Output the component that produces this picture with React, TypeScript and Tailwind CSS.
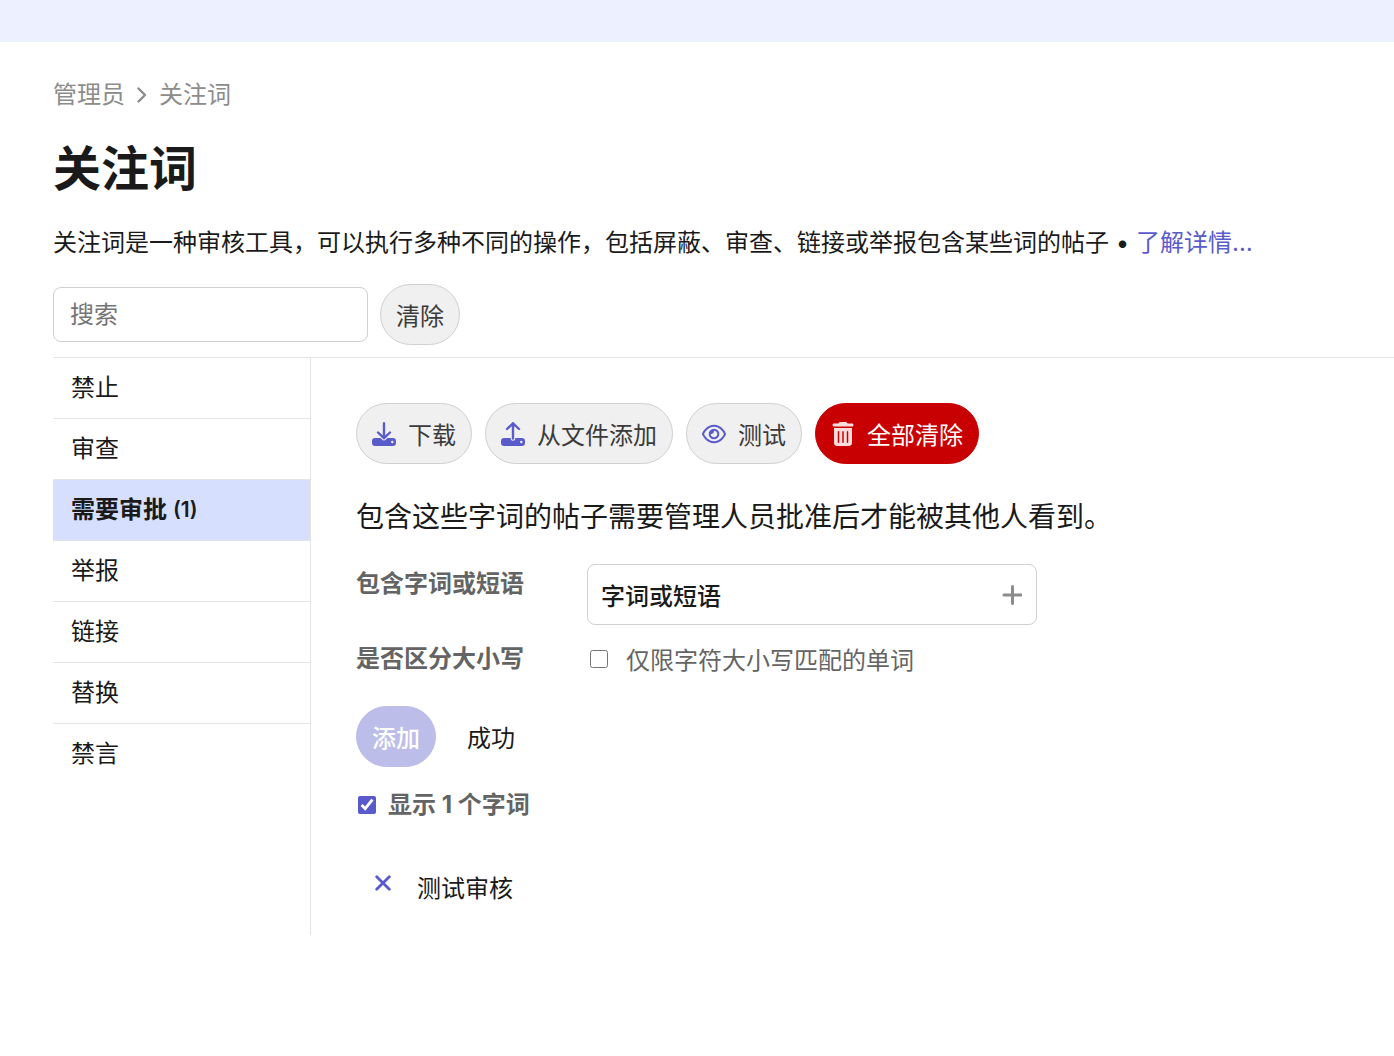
import { useState } from 'react'
import { FaRegEye, FaTrashCan } from 'react-icons/fa6'

const actions = [
  { id: 'block', name: '禁止', count: 0 },
  { id: 'censor', name: '审查', count: 0 },
  { id: 'require_approval', name: '需要审批', count: 1 },
  { id: 'flag', name: '举报', count: 0 },
  { id: 'link', name: '链接', count: 0 },
  { id: 'replace', name: '替换', count: 0 },
  { id: 'silence', name: '禁言', count: 0 },
]

const pill = 'flex h-[61px] items-center gap-3 whitespace-nowrap rounded-full border px-[15px]'
const pillDefault = 'border-[#d0d0d0] bg-[#f0f0f0] text-[#3b3b3b]'

// tray with an arrow above it; the wider stroke cuts the gap between the two
function TrayIcon({ arrow }: { arrow: string }) {
  return (
    <svg viewBox="0 0 24 24" className="size-6 shrink-0" fill="none" strokeLinecap="round" strokeLinejoin="round" aria-hidden="true">
      <rect y="16" width="24" height="8" rx="3.2" fill="#595bca" />
      <path d={arrow} stroke="#f0f0f0" strokeWidth="4.6" />
      <path d={arrow} stroke="#595bca" strokeWidth="2.4" />
      <circle cx="20.300" cy="20" r="1.200" fill="#f0f0f0" />
    </svg>
  )
}

export default function App() {
  const [search, setSearch] = useState('')
  const [selected, setSelected] = useState('require_approval')
  const [caseSensitive, setCaseSensitive] = useState(false)
  const [showWords, setShowWords] = useState(true)

  return (
    <div className="font-[Inter,'Noto_Sans_CJK_SC',sans-serif] text-2xl leading-[36px] text-[#1a1a1a]">
      <div className="h-[42px] bg-[#edf1ff]" />
      <main className="pl-[53px] pt-[35px]">
        <nav className="flex items-center gap-[11px] text-[#8c8c8c]">
          <a href="#admin">管理员</a>
          <svg viewBox="0 0 12 18" className="w-3" fill="none" stroke="currentColor" strokeWidth="2.4" strokeLinecap="round" strokeLinejoin="round" aria-hidden="true">
            <path d="M2.500 2.500l6.500 6.500-6.500 6.500" />
          </svg>
          <a href="#watched_words">关注词</a>
        </nav>

        <h1 className="mt-6 text-5xl font-bold leading-[64px]">关注词</h1>
        <p className="mt-6">
          关注词是一种审核工具，可以执行多种不同的操作，包括屏蔽、审查、链接或举报包含某些词的帖子 •{' '}
          <a href="#more" className="text-[#595bca]">了解详情…</a>
        </p>

        <div className="mt-[23px] flex items-center gap-3">
          <input
            type="text"
            aria-label="搜索"
            placeholder="搜索"
            value={search}
            onChange={(e) => setSearch(e.target.value)}
            className="h-[55px] w-[315px] rounded-lg border border-[#d0d0d0] px-4 placeholder:text-[#757575]"
          />
          <button type="button" onClick={() => setSearch('')} className={`${pill} ${pillDefault}`}>
            <span className="pt-1">清除</span>
          </button>
        </div>

        <div className="mt-3 flex border-t border-[#e4e4e4]">
          <ul className="w-[258px] shrink-0 border-r border-[#e4e4e4]">
            {actions.map((action) => (
              <li key={action.id} className="border-b border-[#e4e4e4] last:border-b-0">
                <button
                  type="button"
                  onClick={() => setSelected(action.id)}
                  className={`flex h-[60px] w-full items-center gap-[6px] px-[18px] text-left ${
                    selected === action.id ? 'bg-[#d7dfff] font-bold' : ''
                  }`}
                >
                  {action.name}
                  {action.count > 0 && <span className="text-[21px] font-semibold">({action.count})</span>}
                </button>
              </li>
            ))}
          </ul>

          <section className="min-w-0 grow px-[45px] pb-7 pt-[45px]">
            <div className="flex flex-wrap gap-[13px]">
              <button type="button" className={`${pill} ${pillDefault}`}>
                <TrayIcon arrow="M12 1.200v15M6 10.500l6 5.700 6-5.700" />
                <span className="pt-1">下载</span>
              </button>
              <button type="button" className={`${pill} ${pillDefault}`}>
                <TrayIcon arrow="M12 16.500V1.300M6 7l6-5.700L18 7" />
                <span className="pt-1">从文件添加</span>
              </button>
              <button type="button" className={`${pill} ${pillDefault}`}>
                <FaRegEye className="size-6 shrink-0 text-[#595bca]" />
                <span className="pt-1">测试</span>
              </button>
              <button type="button" className={`${pill} border-[#c80001] bg-[#c80001] text-white`}>
                <FaTrashCan className="size-6 shrink-0 text-[#ffdddd]" />
                <span className="pt-1">全部清除</span>
              </button>
            </div>

            <p className="mt-[33px] text-[28px] leading-[40px]">包含这些字词的帖子需要管理人员批准后才能被其他人看到。</p>

            <form onSubmit={(e) => e.preventDefault()}>
              <div className="mt-[27px] flex items-start">
                <label htmlFor="words" className="w-[231px] shrink-0 pt-[2px] font-bold text-[#646464]">
                  包含字词或短语
                </label>
                <button
                  type="button"
                  id="words"
                  className="flex h-[61px] w-[450px] items-center justify-between rounded-lg border border-[#d0d0d0] pl-[13px] pr-[14px] font-medium"
                >
                  <span className="pt-1">字词或短语</span>
                  <svg viewBox="0 0 20 20" className="size-5" stroke="#8c8c8c" strokeWidth="3" strokeLinecap="round" aria-hidden="true">
                    <path d="M10.500 1.500v17M2 10h17" />
                  </svg>
                </button>
              </div>

              <div className="mt-[14px] flex items-center text-[#646464]">
                <span className="w-[234px] shrink-0 font-bold">是否区分大小写</span>
                <label className="flex items-center gap-[18px]">
                  <input
                    type="checkbox"
                    checked={caseSensitive}
                    onChange={(e) => setCaseSensitive(e.target.checked)}
                    className="size-[18px] accent-[#595bca]"
                  />
                  <span className="pt-1">仅限字符大小写匹配的单词</span>
                </label>
              </div>

              <div className="mt-[27px] flex items-center gap-[31px]">
                <button type="submit" disabled className={`${pill} border-[#bdbde9] bg-[#bdbde9] font-medium text-white`}>
                  <span className="pt-1">添加</span>
                </button>
                <span className="pt-1">成功</span>
              </div>
            </form>

            <label className="mt-5 flex items-center gap-3 pl-[2px] font-bold text-[#646464]">
              <input
                type="checkbox"
                checked={showWords}
                onChange={(e) => setShowWords(e.target.checked)}
                className="size-[18px] accent-[#595bca]"
              />
              显示 1 个字词
            </label>

            {showWords && (
              <div className="mt-11 flex items-center gap-[26px] pl-[19px]">
                <button type="button" aria-label="删除" className="pb-2">
                  <svg viewBox="0 0 16 16" className="size-4" stroke="#595bca" strokeWidth="2.800" strokeLinecap="round" aria-hidden="true">
                    <path d="M1.700 1.700l12.600 12.600M14.300 1.700L1.700 14.300" />
                  </svg>
                </button>
                <span className="pt-1">测试审核</span>
              </div>
            )}
          </section>
        </div>
      </main>
    </div>
  )
}
